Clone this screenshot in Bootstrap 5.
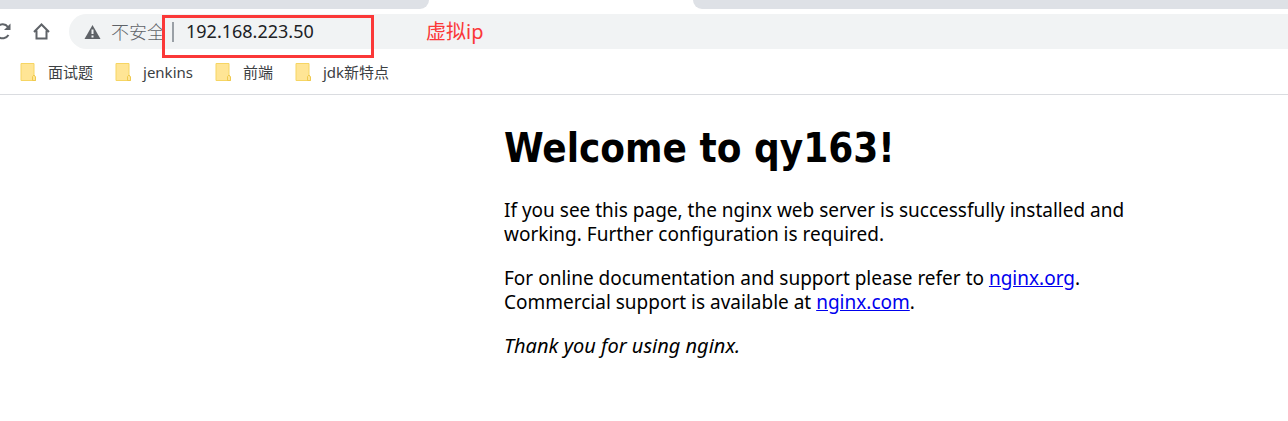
<!DOCTYPE html>
<html lang="zh-CN">
<head>
<meta charset="utf-8">
<meta name="viewport" content="width=device-width, initial-scale=1">
<title>Welcome to qy163!</title>
<link href="https://cdn.jsdelivr.net/npm/bootstrap@5.3.0/dist/css/bootstrap.min.css" rel="stylesheet">
<style>
  body { font-family: "Noto Sans", "Noto Sans CJK SC", sans-serif; color: #000; background: #fff; overflow-x: hidden; }
  .tab-strip { display: grid; grid-template-columns: 429fr 264fr 595fr; height: 9px; }
  .tab-idle { background: #dee1e6; }
  .tab-idle:first-child { border-bottom-right-radius: 9px; }
  .tab-idle:last-child { border-bottom-left-radius: 9px; }
  .toolbar { height: 45px; padding-top: 5px; }
  .tool-btn { color: #5f6368; line-height: 0; }
  .reload { width: 12px; overflow: hidden; }
  .reload svg { margin-left: -8px; }
  .omnibox { height: 35px; margin-left: 17px; padding-left: 15px; background: #f1f3f4; border-radius: 18px 0 0 18px; color: #5f6368; font-size: 18px; line-height: 24px; }
  .insecure { margin-left: 10px; padding-bottom: 2px; font-family: "Noto Sans CJK SC", sans-serif; font-weight: 300; }
  .divider { width: 2px; height: 20px; margin-left: 7px; background: #9aa0a6; }
  .address { width: 180px; margin-left: 12px; margin-bottom: 2px; color: #202124; font-size: 18px; line-height: 24px; }
  .marker { top: 1px; left: 93px; width: 212px; height: 43px; border: 3px solid #fb3838; pointer-events: none; }
  .note { top: 4px; left: 357px; color: #fb3838; font-size: 20px; line-height: 28px; }
  .bookmarks { height: 41px; padding: 0 20px 5px; gap: 22px; border-bottom: 1px solid #dadce0; font-size: 15px; line-height: 20px; }
  .bookmarks a { color: #3c4043; gap: 12px; }
  .page { display: grid; grid-template-columns: 18fr 28fr; }
  .welcome { grid-column: 2; max-width: 700px; padding-top: 29px; font-size: 19px; line-height: 24px; }
  .welcome h1 { margin-bottom: 26px; font: bold 40px/48px "DejaVu Sans Condensed", "DejaVu Sans", sans-serif; font-stretch: condensed; }
  .welcome p { margin-bottom: 20px; }
  .welcome em { font-size: 20px; }
  .welcome a { color: #00e; }
</style>
</head>
<body>
<header>
  <div class="tab-strip"><div class="tab-idle"></div><div></div><div class="tab-idle"></div></div>
  <div class="toolbar d-flex align-items-start">
    <div class="d-flex align-items-center pt-2">
      <button type="button" class="tool-btn reload btn p-0 border-0 rounded-0" aria-label="重新加载">
        <svg width="20" height="20" viewBox="0 0 20 20" fill="none" stroke="currentColor" stroke-width="2"><path d="M16 5A7 7 0 1 0 16.500 13"/><path d="M18.500 1.500v6.500H12z" fill="currentColor" stroke="none"/></svg>
      </button>
      <button type="button" class="tool-btn btn p-0 border-0 ms-3 ps-1" aria-label="主页">
        <svg width="20" height="20" viewBox="0 0 20 20" fill="none" stroke="currentColor" stroke-width="2"><path d="M2 10L9.500 2.500l7.500 7.500M4.500 8.500v8h10v-8"/></svg>
      </button>
    </div>
    <form class="omnibox position-relative d-flex align-items-center flex-grow-1 mb-0">
      <svg width="17" height="16" viewBox="0 0 17 16" fill="#5f6368"><path d="M8.500 1L16.500 15H.5z"/><path d="M7.500 5.500h2v4.500h-2zM7.500 11.500h2v2h-2z" fill="#f1f3f4"/></svg>
      <label class="insecure text-nowrap" for="address">不安全</label>
      <span class="divider"></span>
      <input id="address" class="address border-0 bg-transparent p-0" type="text" value="192.168.223.50">
      <div class="marker position-absolute"></div>
      <div class="note position-absolute text-nowrap">虚拟ip</div>
    </form>
  </div>
  <nav class="bookmarks d-flex align-items-center" aria-label="书签">
    <svg class="d-none"><symbol id="folder" viewBox="0 0 16 18"><path d="M1 .5h13v12.500l1.500 1v3.500H1z" fill="#ffe595" stroke="#f6d563"/><path d="M12.500 17.500v-4l1.500-1.500 1.500 2v3.500z" fill="#ffe595" stroke="#efc94e"/></symbol></svg>
    <a href="#" class="d-flex align-items-center text-decoration-none"><svg width="16" height="18"><use href="#folder"/></svg>面试题</a>
    <a href="#" class="d-flex align-items-center text-decoration-none"><svg width="16" height="18"><use href="#folder"/></svg>jenkins</a>
    <a href="#" class="d-flex align-items-center text-decoration-none"><svg width="16" height="18"><use href="#folder"/></svg>前端</a>
    <a href="#" class="d-flex align-items-center text-decoration-none"><svg width="16" height="18"><use href="#folder"/></svg>jdk新特点</a>
  </nav>
</header>
<main class="page">
  <article class="welcome" lang="en">
    <h1>Welcome to qy163!</h1>
    <p>If you see this page, the nginx web server is successfully installed and<br>working. Further configuration is required.</p>
    <p>For online documentation and support please refer to <a href="#">nginx.org</a>.<br>Commercial support is available at <a href="#">nginx.com</a>.</p>
    <p><em>Thank you for using nginx.</em></p>
  </article>
</main>
<script src="https://cdn.jsdelivr.net/npm/bootstrap@5.3.0/dist/js/bootstrap.bundle.min.js"></script>
</body>
</html>
